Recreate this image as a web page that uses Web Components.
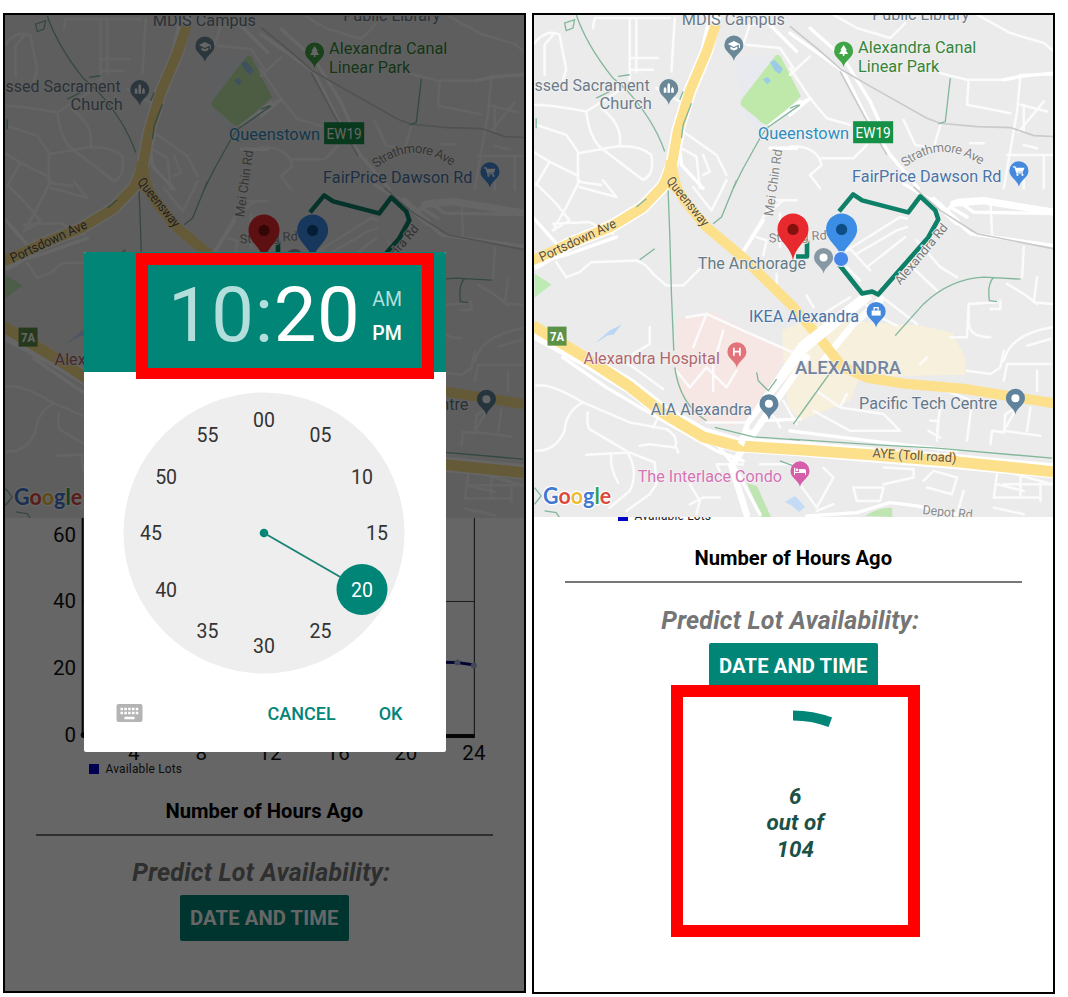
<!DOCTYPE html>
<html lang="en">
<head>
<meta charset="utf-8">
<title>Lot availability</title>
<style>
html,body{margin:0;background:#fff;font-family:Roboto,"Liberation Sans",sans-serif}
body{width:1068px;height:997px;overflow:hidden}
</style>
</head>
<body>
<compare-board></compare-board>
<script>
const define = (name, html) => {
  const t = document.createElement('template');
  t.innerHTML = html;
  customElements.define(name, class extends HTMLElement {
    constructor() {
      super();
      this.attachShadow({mode: 'open'}).appendChild(t.content.cloneNode(true));
    }
  });
};

/* ---- Map ---- */
const PIN = 'M0 16C-1.5 9-9.5 7-9.5 0A9.5 9.5 0 1 1 9.5 0C9.5 7 1.5 9 0 16Z';
const pin = (x, y, c, g) => `<g transform="translate(${x} ${y})"><path d="${PIN}" fill="${c}"/>${g}</g>`;
const big = (x, y, c, d, tip) => `<g transform="translate(${x} ${y})"><path d="M0 ${tip}C-1 17-15.5 12-15.5 0A15.5 16 0 1 1 15.5 0C15.5 12 1 17 0 ${tip}Z" fill="${c}"/><circle r="5.6" fill="${d}"/></g>`;
const label = (x, y, w, s, c, extra = '') => `<text x="${x}" y="${y}" textLength="${w}" lengthAdjust="spacingAndGlyphs" fill="${c}" ${extra}>${s}</text>`;
const tile = (x, y, d) => `<path transform="translate(${x} ${y}) scale(.33333)" d="${d}"/>`;
const dot = '<circle r="4" fill="#fff"/>';

define('area-map', `
<style>
:host{display:block;flex:none;height:var(--map-h,502px);background:#ebebeb;overflow:hidden}
svg{display:block;width:100%;height:502px;margin-top:var(--map-dy,0)}
text{font-family:Roboto,"Liberation Sans",sans-serif;font-size:16.3px;paint-order:stroke;stroke:#f3f3f3;stroke-width:1.6px;stroke-linejoin:round}
.road path{fill:none;stroke:#fff;stroke-width:10;stroke-linejoin:round;stroke-linecap:round}
.minor path{stroke-width:7.5;stroke:#fbfbfb}
.wide path{stroke-width:20}
.trail path{fill:none;stroke:#83b79b;stroke-width:4}
.rail path{fill:none;stroke:#c9cacb;stroke-width:5}
.hw{fill:none;stroke:#fde08b;stroke-linejoin:round}
.hwc{fill:none;stroke:#fff;stroke-linejoin:round}
</style>
<svg viewBox="534.5 15 517.5 502" preserveAspectRatio="xMidYMin slice">
<rect x="530" y="10" width="530" height="510" fill="#ebebeb"/>
<path d="M735 57L780 55L795 90L760 135L742 110Z" fill="#e8eaef"/>
<path d="M776 55Q779 54 781 57L801 96L772 123Q764 127 758 119L741 105Q740 100 745 95Z" fill="#bfe9ab"/>
<path d="M770 62l5-2 8 9-3 5-5-3zM763 79l5-2 3 4-4 3z" fill="#9bcbe8"/>
<path d="M535 273L552 284L535 297Z" fill="#bdebb3"/>
<path d="M678 318L700 316L712 311L788 352L760 405L735 425L695 420L678 390Z" fill="#f6e6e4"/>
<path d="M782 330L812 318L920 325L952 332L965 357L965 374L860 376L850 400L800 420L788 405L784 370Z" fill="#f6f0dc"/>
<path d="M596 342l14-12 12-6-8 10-6 1-10 6z" fill="#bcd6f5"/>
<path d="M747 482l10 3 14 31h-9zM865 515q14-9 27-8v9z" fill="#bfe6b2"/>
<path d="M785 501l10-6 4 4 6 7-6 5-8-7z" fill="#c4dbf5"/>

<g class="road minor">
${tile(530,8,'M10 110Q50 60 90 80L110 185L100 215M45 200L45 110L75 75M190 60L195 30L420 30M300 30L300 215M320 30L320 190M300 150H385M300 185H370M435 30L425 190M10 290Q60 290 170 310L265 250M170 310Q180 390 215 420L340 515Q375 500 365 440Q330 410 260 415L145 435M215 300Q280 350 270 410M20 350L110 380L145 430L145 520L215 530M10 430L60 460L140 500M60 460L20 530M380 240L450 280M460 370L560 440L590 500M455 420L500 445L510 540M520 440L540 490L520 500M650 110L750 120L790 180M640 110L660 50L750 45')}
${tile(790,8,'M0 200L60 145M0 300L60 270L110 330L180 350M60 270L0 180M130 20L200 60L300 90L345 45M560 20L660 75L760 105L790 130M450 195L530 215L640 215L700 200L790 200M690 200L680 310L640 540M535 215L530 290L660 315M690 290L770 310M685 370L760 280M700 290V370M340 335L375 410L430 420L450 350M0 415Q80 410 95 470L60 500L90 540M95 450L190 450L230 410M540 405L580 405M700 410L740 420M650 440H790M760 440V540M700 470V540')}
${tile(530,180,'M20 10L80 70L120 120L70 150M150 0L110 80L75 140M150 20L260 50L220 0M70 130L180 125L250 160M80 245L110 290L150 275L185 245L320 240Q350 250 370 280L410 315L460 315L510 265M490 20L545 90L590 0M640 210L700 110L760 60M700 110L730 60H800M680 170L710 180L700 225M740 280V330M470 410L530 400L640 450L800 520M530 400L490 500M580 450L560 520M360 440V490L310 520M750 100V200')}
${tile(790,180,'M170 210L330 110L350 115M200 220L320 150L350 140M180 205L240 270M230 260L345 170M170 260L210 300M380 180L450 260L500 290M345 240L440 330M270 345L380 430M210 350L250 400L320 435M50 345L70 380M600 60L605 160M700 200L695 290M650 310L700 340L740 370M740 290L730 365L785 370M535 370V430Q540 470 600 470M480 470H530L535 370L620 365M600 385H630V360M640 540Q660 460 785 440M710 495L780 475M100 400L180 350')}
${tile(530,350,'M20 105Q60 95 160 155L300 215L410 235Q450 260 435 290L360 280L330 285M160 155Q110 180 105 240Q80 300 20 300M175 185Q170 220 180 235L290 300Q330 360 300 420L240 470M170 312L300 305L375 335L380 400L360 430L290 480M245 315Q240 350 265 395M440 290L445 305M270 20L400 115M400 170L370 230M440 60L480 110L530 50L590 110L620 60M550 120V40M570 360L560 340H640M480 400L510 450L500 490M480 460L520 440H570M690 340L800 340M750 230Q740 200 720 190M760 150L800 220M530 215H660')}
${tile(790,350,'M80 120L150 170L280 190L330 240L180 240L70 180M150 170L170 130M390 40L410 20M420 210H445L440 270M415 240L450 260M530 270L545 150L440 110M450 170L440 240M530 60L600 70L630 50L640 0M640 90L650 40H780M740 60V120M600 280L605 240L640 245L645 190L680 170L640 240L750 255M720 170L710 240M640 400H785M620 400L700 420M615 440H750M620 370L610 440M690 370V440M190 410H280L270 450H200L190 410M280 400L370 380V355L280 350M400 390L430 360L500 380L485 430L410 410M520 420L500 490M30 400L80 470L130 380L100 350M80 480L130 460M750 390V450M610 470L700 490M640 360L785 400')}
</g>
<g class="road">
${tile(530,8,'M810 280L720 350M460 380L450 420L455 470L520 540M720 420H800M700 30L800 130')}
${tile(790,8,'M0 75L160 190L230 330L300 440L385 540M60 60L160 150L240 280L290 390M0 320L60 270M790 195L690 205L640 215')}
${tile(790,180,'M340 10L440 70L540 160L790 195M470 90L500 60L580 55L790 90M480 80L530 110M500 60L550 95L790 100')}
${tile(530,180,'M10 110L90 200M10 250L120 220L260 170M640 215L700 120')}
${tile(530,350,'M540 255L610 340L690 490M610 340L660 240M690 210L810 205M100 20L230 110L340 175L560 300L640 330')}
${tile(790,350,'M50 495L200 485L300 455L380 465L500 490M0 240L240 270L500 300')}
</g>
<g class="road wide">
${tile(790,180,'M100 540L190 430L270 360M490 70L580 62L785 95M430 60L500 125')}
${tile(530,350,'M650 490L605 345L690 220L830 20')}
</g>
<g class="rail">
${tile(790,8,'M0 55L80 120L155 185L250 240L410 330L450 345L560 355L660 358L730 382L790 385M150 190L220 320L290 440')}
${tile(790,180,'M370 20L450 90L560 160L790 205')}
</g>

<path class="hwc" stroke-width="13" d="M715 15L707 51L690 91L678 131L672 165L664 185L643 207L610 227L570 243L533 264"/>
<path class="hw" stroke-width="10" d="M716 24L707 51L690 91L678 131L672 165L664 185L643 207L610 227L570 243L533 260"/>
<path fill="#fde08b" d="M666 160Q665 178 648 199L668 188L687 199Q678 180 677 160Z"/>
<path class="hw" stroke-width="10" d="M672 180L686 202L707 227L743 257L792 305L820 338L842 366L867 377L905 383L963 388L1056 403"/>
<path class="hwc" stroke-width="15" d="M533 330L583 357L630 385L663 411L703 434L737 444L800 448L870 454L957 461L1054 470"/>
<path class="hw" stroke-width="11" d="M533 325L583 355L630 386L663 412L703 436L737 445L800 449L870 454L957 461L1054 471"/>
<path d="M866 290L872 298L806 352L750 424L744 446L738 442L746 420L799 342Z" fill="#fff"/>

<g class="trail">
${tile(530,8,'M140 20Q170 110 250 210L285 240Q370 330 405 430M105 45L135 35L130 60L110 68ZM485 285L460 350L455 390M460 250L450 275M810 290L710 360L690 390L640 480L610 540M265 205L300 200M200 270L240 250M20 330V360')}
${tile(790,8,'M480 210L465 340L445 347M0 300L25 290')}
${tile(530,180,'M620 0L575 110L550 130M415 30L420 160L425 340L432 510M320 80L350 55M330 238L375 205')}
${tile(790,180,'M315 465L400 370Q480 295 580 290L690 296M610 290Q590 310 597 360L620 363')}
${tile(530,350,'M435 50Q450 160 530 210M555 230L670 258L810 268M680 65L685 90L715 120L740 85M15 410L35 435L15 460M45 480L80 485L90 500M750 330L790 345')}
${tile(790,350,'M10 220L60 150L125 60M0 265L260 282L440 292L785 322')}
</g>

<path fill="none" stroke="#0d8067" stroke-width="4.600" stroke-linejoin="round" d="M839 211L853 194L862 200L908 212L920 196L935 210L938 219L928 237L878 294L872 291L862 293L839 264M807 240V256H796"/>

${label(682,25,103,'MDIS Campus','#6c7b8a')}
${label(872,19.5,97,'Public Library','#6c7b8a')}
${label(858,53,118,'Alexandra Canal','#358539')}
${label(858,72,81,'Linear Park','#358539')}
${label(535,90.5,115,'ssed Sacrament','#6c7b8a')}
${label(600,109,52,'Church','#6c7b8a')}
${label(758,138.5,91,'Queenstown','#2f8dc0')}
<rect x="853" y="121" width="40" height="22" fill="#159047"/>
<text x="855.500" y="137.500" textLength="35" lengthAdjust="spacingAndGlyphs" fill="#fff" style="stroke:none;font-size:15px">EW19</text>
${label(852,181.5,149,'FairPrice Dawson Rd','#4a74a8')}
${label(698,268.5,108,'The Anchorage','#647b85')}
${label(749,321,110,'IKEA Alexandra','#4a74a8')}
${label(584,363,136,'Alexandra Hospital','#b0686c')}
${label(795,373,106,'ALEXANDRA','#75849b','font-weight="500" style="font-size:18px"')}
${label(651,414,101,'AIA Alexandra','#64788c')}
${label(859,408.5,138,'Pacific Tech Centre','#64788c')}
${label(638,481.5,144,'The Interlace Condo','#d673b6')}
${label(872,456.5,84,'AYE (Toll road)','#6b5530','transform="rotate(3.5 872 457)" style="font-size:13px;stroke:#fbe9b4"')}
${label(922,513,50,'Depot Rd','#8b8b8b','transform="rotate(6 922 513)" style="font-size:13px"')}
${label(542,261.5,83,'Portsdown Ave','#5d5030','transform="rotate(-25 542 261)" style="font-size:13.5px;stroke:#fbe9b4"')}
${label(666,181,59,'Queensway','#5d5030','transform="rotate(51 666 181)" style="font-size:13.5px;stroke:#fbe9b4"')}
${label(773,216,67,'Mei Chin Rd','#858585','transform="rotate(-82 773 216)" style="font-size:13px"')}
${label(769,242,58,'Stirling Rd','#858585','transform="rotate(-3 769 242)" style="font-size:12.5px"')}
${label(900,285,75,'Alexandra Rd','#777','transform="rotate(-50 900 285)" style="font-size:12.5px"')}
<path id="sa" fill="none" d="M905 167Q942 137 982 166"/>
<text fill="#858585" style="font-size:13px"><textPath href="#sa" textLength="82">Strathmore Ave</textPath></text>

<rect x="548" y="326" width="19" height="19" fill="#5d9146"/>
<text x="550.500" y="340" textLength="14" lengthAdjust="spacingAndGlyphs" fill="#fff" font-weight="700" style="stroke:none;font-size:12px">7A</text>

${pin(734,45,'#6b8899','<path fill="#fff" d="M-6-1L0-4 6-1 0 2zM-3.5 1.5L0 3.2 3.5 1.5V4L0 5.5-3.5 4zM5-1h1v4H5z"/>')}
${pin(843.5,51,'#40a546','<path fill="#fff" d="M0-6L3.2-1H2L4.5 3H.8V5H-.8V3H-4.5L-2-1H-3.2z"/>')}
${pin(669,88.5,'#6b8899','<path fill="#fff" d="M-1.3-4L0-6 1.3-4V4H-1.3zM-5 0l1.3-2L-2.4 0V4H-5zM5 0L3.7-2 2.4 0V4H5z"/>')}
${pin(1018.5,170.5,'#4489dd','<path fill="none" stroke="#fff" stroke-width="1.3" d="M-6-4h2l2 6h6"/><path fill="#fff" d="M-3.5-3h9L4 1h-6.5z"/><circle cx="-1.5" cy="4" r="1.1" fill="#fff"/><circle cx="3.5" cy="4" r="1.1" fill="#fff"/>')}
${pin(823.5,257,'#8798a5',dot)}
${pin(876,311,'#4489dd','<path fill="#fff" d="M-4.5-1h9V4h-9z"/><path fill="none" stroke="#fff" stroke-width="1.3" d="M-2-1V-4H2V-1"/>')}
${pin(737,351,'#e2737a','<path fill="none" stroke="#fff" stroke-width="1.7" d="M-3-4V4M3-4V4M-3 0H3"/>')}
${pin(769,403,'#5f839c',dot)}
${pin(1015,397.5,'#5f839c',dot)}
${pin(800,470,'#d65da9','<path fill="#fff" d="M-6-3h1.2V1H-1V-2H4Q6-2 6 0V4H5V2H-5V4H-6z"/><circle cx="-3" cy="-1" r="1.3" fill="#fff"/>')}
${big(793,229,'#e8292d','#85110f',32)}
${big(841.5,229,'#3b8de6','#0e4c85',30)}
<circle cx="841" cy="258.500" r="7.500" fill="#4687ea" stroke="#e8eef8" stroke-width="1"/>
<text x="543.500" y="503" textLength="68" lengthAdjust="spacingAndGlyphs" style="font-family:Lato,Roboto,sans-serif;font-size:22px;font-weight:700;stroke:#fff;stroke-width:2.5px"><tspan fill="#4079d0">G</tspan><tspan fill="#dc4a3d">o</tspan><tspan fill="#eebb35">o</tspan><tspan fill="#4079d0">g</tspan><tspan fill="#3a9d54">l</tspan><tspan fill="#dc4a3d">e</tspan></text>
</svg>`);

/* ---- Chart visible under the map ---- */
define('lots-chart', `
<style>
:host{display:block;flex:none;height:244px}
svg{display:block;width:100%;height:100%}
text{font-family:Roboto,"Liberation Sans",sans-serif;font-size:20.5px;fill:#111}
.y{text-anchor:end}.x{text-anchor:middle}
</style>
<svg viewBox="5.5 518 517.5 244" preserveAspectRatio="none">
<path d="M83 601.500H474M474 518V735" stroke="#444" stroke-width="1.200" fill="none"/>
<path d="M83 518V736" stroke="#111" stroke-width="2"/><circle cx="84" cy="735" r="3" fill="#111"/>
<path d="M83 736H474.500" stroke="#111" stroke-width="4"/>
<path d="M420 662L457 662.500L474 665" stroke="#0a0a80" stroke-width="3" fill="none"/>
<circle cx="457" cy="662.500" r="3" fill="#a9b6d8"/><circle cx="473.500" cy="665.500" r="3" fill="#a9b6d8"/>
<g class="y"><text x="76.500" y="542">60</text><text x="76.500" y="608">40</text><text x="76.500" y="675">20</text><text x="76.500" y="742">0</text></g>
<g class="x"><text x="134" y="760">4</text><text x="201.500" y="760">8</text><text x="270" y="760">12</text><text x="338" y="760">16</text><text x="405.500" y="760">20</text><text x="473.500" y="760">24</text></g>
</svg>`);

define('chart-legend', `
<style>
:host{display:flex;flex:none;align-items:center;gap:7px;height:14px;padding-left:83.5px;font-size:11.9px;line-height:14px;letter-spacing:.2px;color:#222}
i{width:10px;height:10px;background:#0000c8}
</style><i></i><span><slot></slot></span>`);

define('section-title', `
<style>
:host{display:block;flex:none;margin:0 30.5px;height:35px;border-bottom:2px solid #777;text-align:center;font-size:20.2px;line-height:25px;font-weight:700;color:#000}
</style><span><slot></slot></span>`);

define('predict-heading', `
<style>
:host{display:block;flex:none;margin-top:21px;height:38px;padding-right:6px;text-align:center;font-size:25px;line-height:31px;font-style:italic;font-weight:700;color:#757575}
span{letter-spacing:.22px}
</style><span><slot></slot></span>`);

define('action-button', `
<style>
:host{display:flex;flex:none;align-self:center;align-items:center;justify-content:center;width:169px;height:46px;border-radius:2px;background:#008577;color:#fff;font-size:20.2px;font-weight:700;letter-spacing:.1px}
</style><span><slot></slot></span>`);

/* ---- Progress ring with centred count ---- */
define('lot-ring', `
<style>
:host{display:grid;place-items:center;width:226px;height:228px}
svg,div{grid-area:1/1}
div{text-align:center;font-size:22.4px;line-height:26.3px;font-style:italic;font-weight:700;color:#1b5147;margin-top:-2px;padding-left:4px}
</style>
<svg width="226" height="228" viewBox="-113 -110.500 226 228"><path d="M0-105A105 105 0 0 1 37.300-98.200" fill="none" stroke="#008577" stroke-width="10"/></svg>
<div><slot></slot></div>`);

/* ---- Time picker dialog ---- */
const marks = [...Array(12)].map((_, i) => {
  const a = i * Math.PI / 6, s = String(i * 5).padStart(2, '0');
  return `<text x="${(113 * Math.sin(a)).toFixed(1)}" y="${(7 - 113 * Math.cos(a)).toFixed(1)}"${i === 4 ? ' fill="#fff"' : ''}>${s}</text>`;
}).join('');
define('time-picker', `
<style>
:host{display:flex;flex-direction:column;width:362px;height:500px;background:#fff;border-radius:2px;overflow:hidden}
header{height:120px;flex:none;background:#008577;display:flex;align-items:center;box-sizing:border-box;padding:7px 0 0 84px;color:#b2dfdb}
.t{font-size:76px;line-height:113px;letter-spacing:.6px}
b{font-weight:400;color:#fff}
.ap{font-size:19.5px;line-height:34px;margin:3px 0 0 12px}
.ap b{font-weight:500;display:block}
.face{margin:20px auto 0 39px;flex:none;display:block}
.face text{font-family:Roboto,"Liberation Sans",sans-serif;font-size:19.5px;text-anchor:middle;fill:#333}
.face text[fill]{fill:#fff}
footer{display:flex;align-items:center;margin-top:23px;height:32px;padding:0 43.5px 0 32px;color:#008577;font-size:18px;font-weight:500}
footer svg{margin-right:auto}
.ok{margin-left:43px}
</style>
<header><div class="t">10:<b>20</b></div><div class="ap">AM<b>PM</b></div></header>
<svg class="face" width="282" height="282" viewBox="-141 -141 282 282">
<circle r="140.500" fill="#eee"/><circle r="4.300" fill="#008577"/><path d="M0 0L98 56.500" stroke="#1b8474" stroke-width="2"/><circle cx="98" cy="56.500" r="25.500" fill="#008577"/>${marks}</svg>
<footer><svg width="27" height="18" viewBox="0 0 27 18"><rect x=".5" width="26" height="18" rx="2" fill="#b4b4b4"/><path d="M4.500 5H22.500M4.500 9H22.500" stroke="#fff" stroke-width="2.400" stroke-dasharray="2.600 1.200"/><path d="M8.500 14H18.500" stroke="#fff" stroke-width="2.400"/></svg><span>CANCEL</span><span class="ok">OK</span></footer>`);

define('phone-frame', `
<style>
:host{display:flex;flex-direction:column;position:relative;box-sizing:border-box;width:522.5px;height:980px;border:2.5px solid #000;background:#fff;overflow:hidden}
</style><slot></slot>`);

define('compare-board', `
<style>
:host{display:flex;box-sizing:border-box;width:1068px;height:997px;padding:12.5px 0 0 3px;gap:6.5px;position:relative}
.a{--map-h:503px;--map-dy:1px}
.a section-title{margin-top:23px}
.b{height:981px}
.clip{height:6px;flex:none;overflow:hidden;display:flex;align-items:flex-end}
.b section-title{margin-top:23px}
.b predict-heading{margin-top:22px}
.b lot-ring{align-self:center;margin-top:21px}
.scrim{position:absolute;inset:0;background:rgba(0,0,0,.6)}
time-picker{position:absolute;left:84px;top:252px}
.mark{position:absolute;box-sizing:border-box;border:12px solid #f00}
.m1{left:136px;top:253px;width:298px;height:126px;border-bottom-width:11px}
.m2{left:671px;top:685px;width:249px;height:252px}
</style>
<phone-frame class="a">
<area-map></area-map><lots-chart></lots-chart><chart-legend>Available Lots</chart-legend>
<section-title>Number of Hours Ago</section-title>
<predict-heading>Predict Lot Availability:</predict-heading>
<action-button>DATE AND TIME</action-button>
<div class="scrim"></div>
</phone-frame>
<phone-frame class="b">
<area-map></area-map><div class="clip"><chart-legend>Available Lots</chart-legend></div>
<section-title>Number of Hours Ago</section-title>
<predict-heading>Predict Lot Availability:</predict-heading>
<action-button>DATE AND TIME</action-button>
<lot-ring>6<br>out of<br>104</lot-ring>
</phone-frame>
<time-picker></time-picker>
<div class="mark m1"></div><div class="mark m2"></div>`);
</script>
</body>
</html>
